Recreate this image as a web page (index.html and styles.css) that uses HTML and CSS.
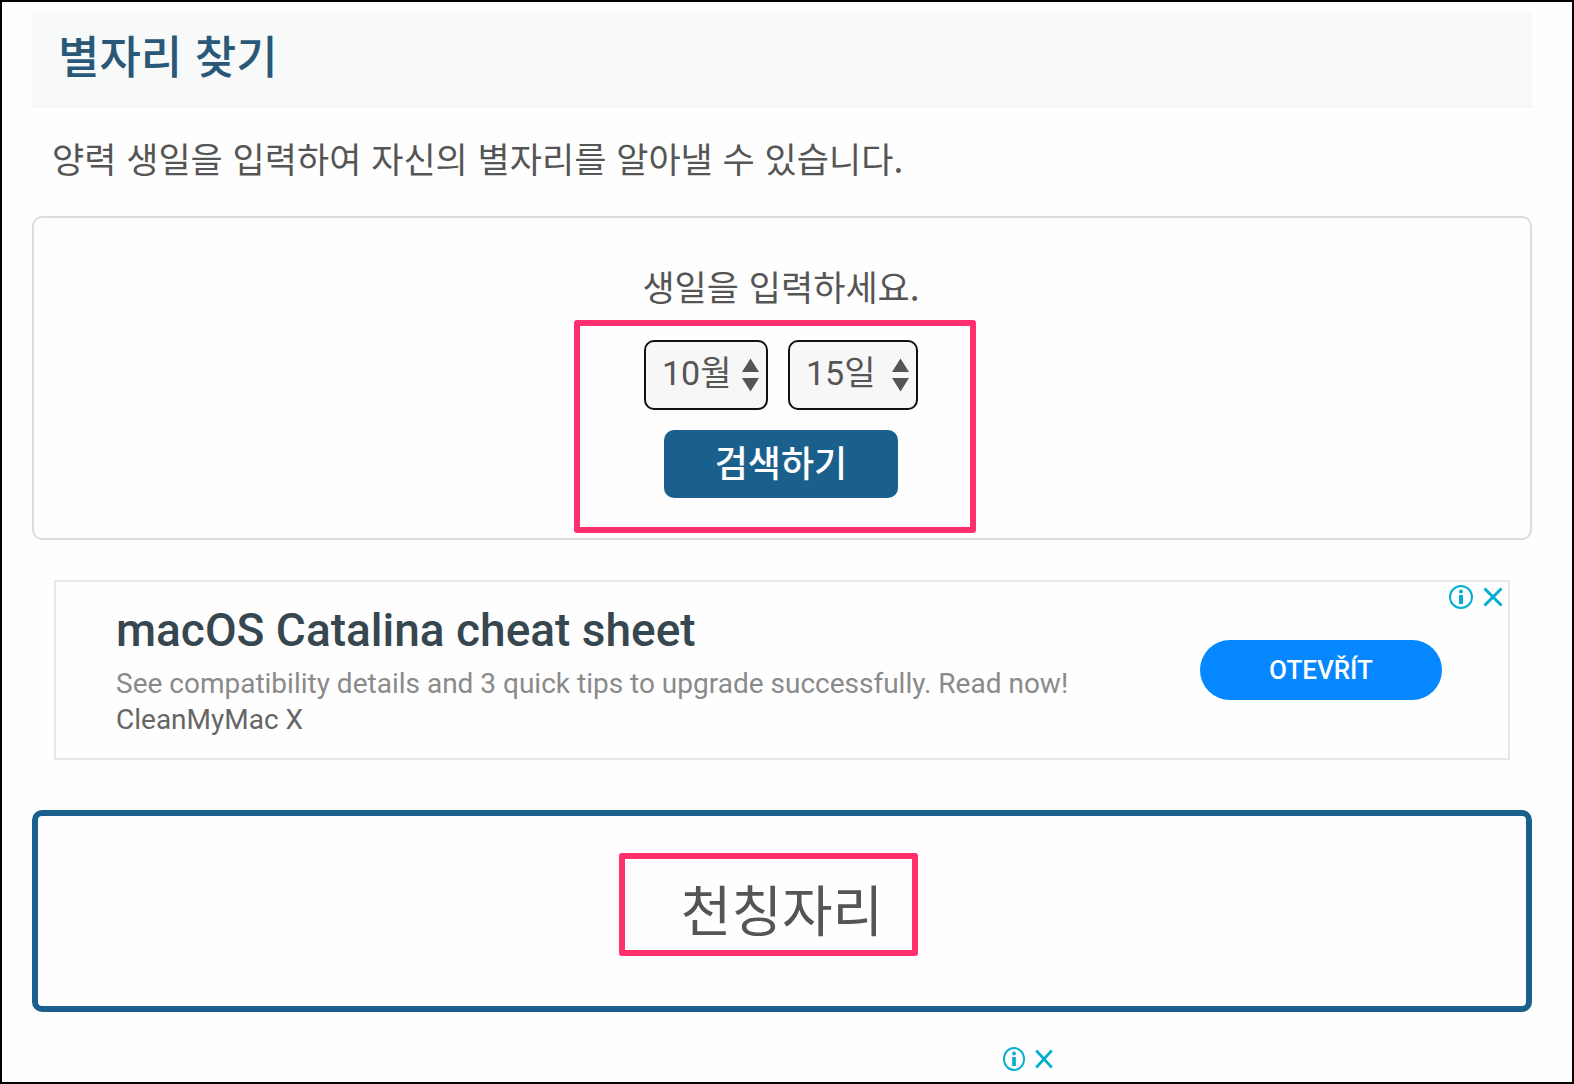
FILE: index.html
```html
<!DOCTYPE html>
<html lang="ko">
<head>
  <meta charset="UTF-8" />
  <meta name="viewport" content="width=device-width, initial-scale=1.0"/>
  <title>별자리 찾기</title>
  <link rel="stylesheet" href="styles.css">
</head>
<body>
  <header class="page-title">
    <h1>별자리 찾기</h1>
  </header>

  <main>
    <p class="intro">양력 생일을 입력하여 자신의 별자리를 알아낼 수 있습니다.</p>

    <form class="search-box" onsubmit="return false">
      <p class="search-label" id="birthdayLabel">생일을 입력하세요.</p>
      <div class="search-fields">
        <div class="selects">
          <div class="select month">
            <select id="month" aria-label="월" aria-describedby="birthdayLabel">
              <option>10월</option>
            </select>
            <svg class="arrows" viewBox="0 0 17 34" aria-hidden="true"><path d="M8.500 0.500 17 14H0zM0 20h17L8.500 33.500z"/></svg>
          </div>
          <div class="select day">
            <select id="day" aria-label="일" aria-describedby="birthdayLabel">
              <option>15일</option>
            </select>
            <svg class="arrows" viewBox="0 0 17 34" aria-hidden="true"><path d="M8.500 0.500 17 14H0zM0 20h17L8.500 33.500z"/></svg>
          </div>
        </div>
        <button class="search-btn" type="submit">검색하기</button>
        <div class="highlight highlight-form"></div>
      </div>
    </form>

    <!-- Ad banner -->
    <section class="ad">
      <div class="ad-text">
        <h2>macOS Catalina cheat sheet</h2>
        <p class="ad-desc">See compatibility details and 3 quick tips to upgrade successfully. Read now!</p>
        <p class="ad-brand">CleanMyMac X</p>
      </div>
      <button class="ad-btn">OTEVŘÍT</button>
      <div class="ad-choices">
        <button class="icon-btn" aria-label="Info">
          <svg viewBox="0 0 24 24"><circle cx="12" cy="12" r="11"/><circle class="fill" cx="12" cy="6.500" r="2"/><path class="fill" d="M10 10h4v9h-4z"/></svg>
        </button>
        <button class="icon-btn" aria-label="Close">
          <svg viewBox="0 0 24 24"><path class="cross" d="M3.500 3.500l17 17M20.500 3.500l-17 17"/></svg>
        </button>
      </div>
    </section>

    <section class="result">
      <div class="result-name">
        천칭자리
        <div class="highlight highlight-result"></div>
      </div>
    </section>
  </main>

  <!-- Next ad slot -->
  <div class="ad-next">
    <button class="icon-btn" aria-label="Info">
      <svg viewBox="0 0 24 24" preserveAspectRatio="none"><circle cx="12" cy="12" r="11"/><circle class="fill" cx="12" cy="6.500" r="2"/><path class="fill" d="M10 10h4v9h-4z"/></svg>
    </button>
    <button class="icon-btn" aria-label="Close">
      <svg viewBox="0 0 24 24" preserveAspectRatio="none"><path class="cross" d="M3.500 3.500l17 17M20.500 3.500l-17 17"/></svg>
    </button>
  </div>
</body>
</html>
```
FILE: styles.css
```css
:root {
  --blue: #1b5f8c;
  --text: #555;
  --pink: #ff2f6d;
  --ad-icon: #00aecd;
}

* {
  box-sizing: border-box;
}

body {
  margin: 0;
  min-height: 100vh;
  padding: 10px 40px 0 30px;
  border: 2px solid #000;
  background-color: #fefefe;
  color: var(--text);
  font-family: "Noto Sans CJK KR", sans-serif;
}

h1, h2, p {
  margin: 0;
  font-weight: normal;
}

button {
  border: none;
  cursor: pointer;
}

.page-title {
  padding: 13px 26px 21px;
  background-color: #f8faf9;
  border-bottom: 2px solid #f4f5f5;
}

.page-title h1 {
  color: #2a5878;
  font-size: 45px;
  line-height: 60px;
  font-weight: 500;
}

.intro {
  padding: 24px 20px 32px;
  font-size: 35px;
  line-height: 52px;
}

/* birthday form */
.search-box {
  padding: 42px 22px 40px 20px;
  border: 2px solid #ddd;
  border-radius: 10px;
  text-align: center;
}

.search-label {
  font-size: 35px;
  line-height: 52px;
}

.search-fields {
  position: relative;
  display: flex;
  flex-direction: column;
  align-items: center;
  gap: 20px;
  width: fit-content;
  margin: 28px auto 0;
}

.selects {
  display: flex;
  gap: 20px;
}

.select {
  position: relative;
}

.month {
  width: 124px;
}

.day {
  width: 130px;
}

.select select {
  appearance: none;
  width: 100%;
  height: 70px;
  padding: 0 0 4px 16px;
  border: 2px solid #111;
  border-radius: 10px;
  background-color: #f7f7f7;
  color: var(--text);
  font-family: Roboto, "Noto Sans CJK KR", sans-serif;
  font-size: 34px;
}

.arrows {
  position: absolute;
  top: 18px;
  right: 9px;
  width: 17px;
  height: 34px;
  fill: var(--text);
  pointer-events: none;
}

.search-btn {
  padding: 5px 51px 11px;
  border-radius: 10px;
  background-color: var(--blue);
  color: #fff;
  font-family: inherit;
  font-size: 36px;
  line-height: 52px;
  font-weight: 500;
}

.highlight {
  position: absolute;
  border: 6px solid var(--pink);
  border-radius: 3px;
  pointer-events: none;
}

.highlight-form {
  inset: -20px -58px -35px -70px;
}

/* ad banner */
.ad {
  position: relative;
  display: flex;
  align-items: center;
  justify-content: space-between;
  margin: 40px 22px 50px;
  padding: 20px 66px 20px 60px;
  border: 2px solid #e6e7e8;
  font-family: Roboto, sans-serif;
}

.ad h2 {
  margin-bottom: 8px;
  color: #37474f;
  font-size: 46px;
  line-height: 56px;
  font-weight: 500;
}

.ad-desc, .ad-brand {
  color: #8a8a8a;
  font-size: 28px;
  line-height: 36px;
}

.ad-brand {
  color: #666;
}

.ad-btn {
  width: 242px;
  height: 60px;
  border-radius: 30px;
  background-color: #0587ff;
  color: #fff;
  font-family: inherit;
  font-size: 26px;
  font-weight: 500;
}

.ad-choices {
  position: absolute;
  top: 3px;
  right: 3px;
  display: flex;
  gap: 8px;
}

.icon-btn {
  padding: 0;
  background: none;
}

.icon-btn svg {
  display: block;
  width: 24px;
  height: 24px;
  fill: none;
  stroke: var(--ad-icon);
  stroke-width: 2;
}

.icon-btn .fill {
  fill: var(--ad-icon);
  stroke: none;
}

.icon-btn .cross {
  stroke-width: 3;
}

/* result */
.result {
  padding: 52px 20px 60px;
  border: 6px solid var(--blue);
  border-radius: 10px;
}

.result-name {
  position: relative;
  width: fit-content;
  margin: 0 auto;
  font-size: 55px;
  line-height: 78px;
}

.highlight-result {
  inset: -15px -35px -10px -62px;
}

.ad-next {
  display: flex;
  justify-content: center;
  gap: 8px;
  margin-top: 35px;
  padding-left: 494px;
}

.ad-next svg {
  width: 22px;
}
```
